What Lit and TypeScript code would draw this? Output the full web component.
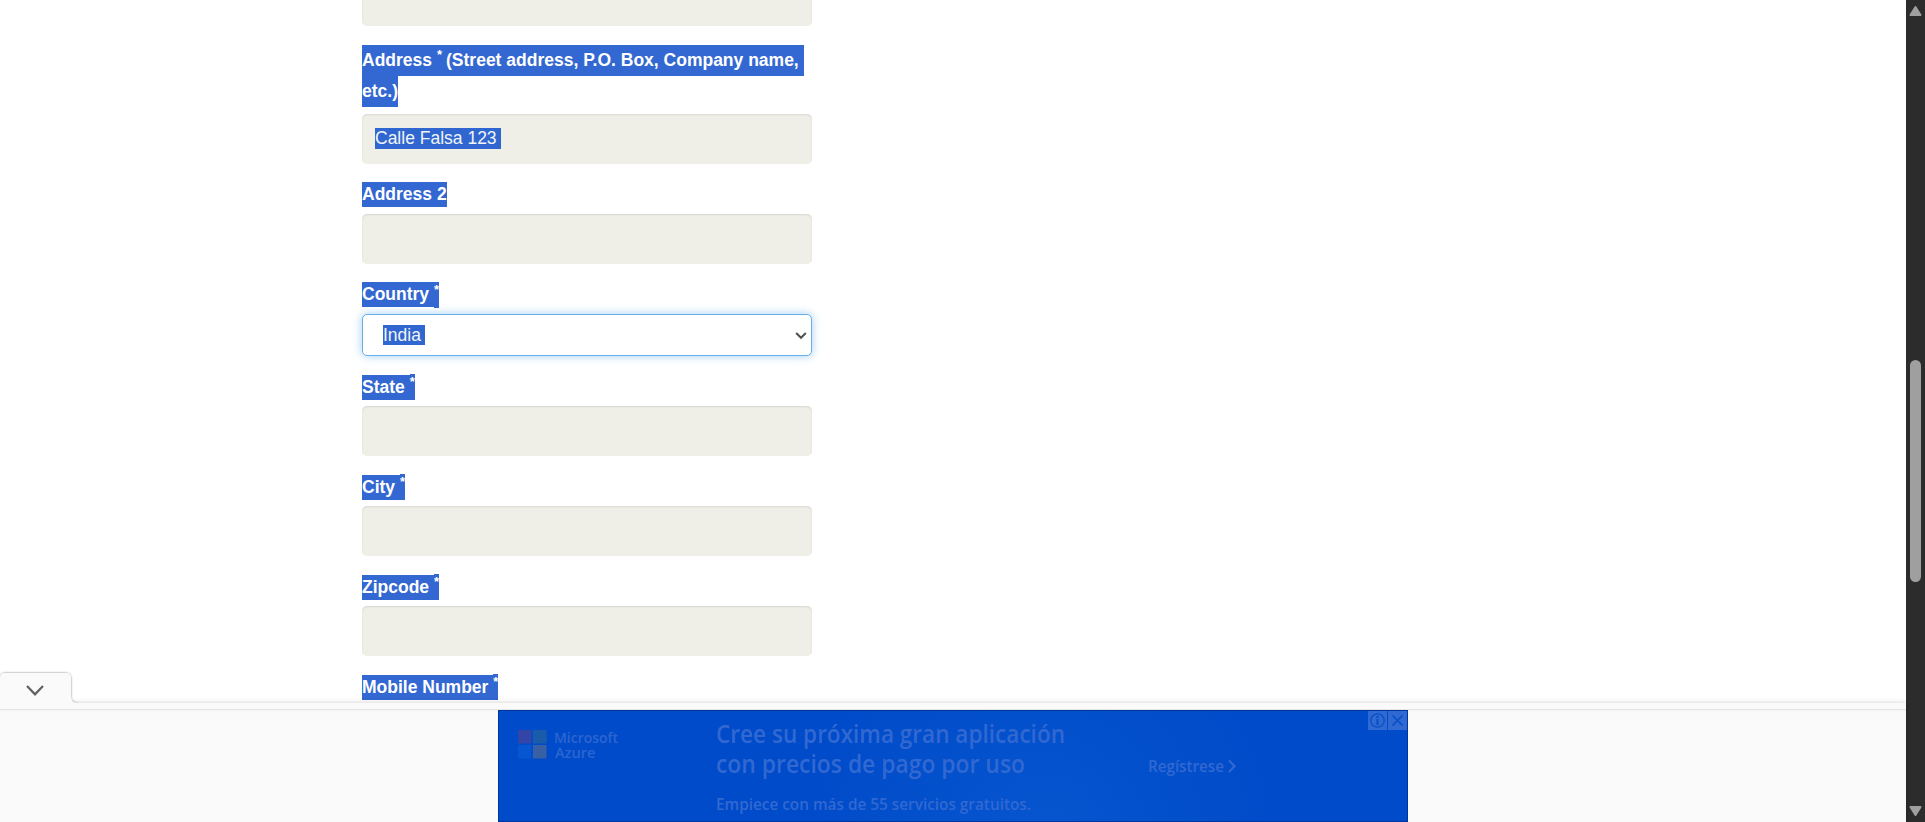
import { LitElement, html, css, svg, nothing } from "lit";
import { customElement, property } from "lit/decorators.js";

@customElement("form-field")
class FormField extends LitElement {
  @property() label = "";
  @property() value = "";
  @property() note = "";
  @property() kind = "text";
  @property({ type: Boolean }) required = false;
  @property({ type: Boolean }) bare = false;

  static styles = css`
    :host { display: block; font: 17.5px/25px "Liberation Sans", Arial, sans-serif; }
    .label { display: flex; height: 25px; font-weight: bold; color: #fff; white-space: pre; margin-bottom: 7px; }
    .label.req { margin-bottom: 6px; }
    .label.country { margin-bottom: 7px; }
    .mark { background: #3367d1; }
    .star { background: #3367d1; width: 5px; height: 26px; margin-top: -1px; font-size: 13px; line-height: 15px; }
    .star.low { margin-top: 0; }
    .long { display: block; height: auto; line-height: 31px; }
    .long .mark { display: block; height: 31px; width: fit-content; }
    .long sup { font-size: 13px; line-height: 0; vertical-align: 7px; margin-right: -.8px; }
    .box { box-sizing: border-box; height: 50px; border-radius: 5px; background: #efefe7; padding: 14px 13px; box-shadow: inset 0 1px 2px rgba(0, 0, 0, .1); }
    .text { display: inline-block; height: 21px; line-height: 20px; background: #3066cf; color: #f1f4f8; padding-right: 4px; vertical-align: top; }
    .select { box-sizing: border-box; display: flex; justify-content: space-between; height: 42px; border: 1px solid #66afe9; border-radius: 5px; background: #fff; padding: 10px 4px 0 20px; box-shadow: 0 0 10px rgba(102, 175, 233, .6); }
    .select .text { height: 20px; }
    .select svg { display: block; margin-top: 6px; }
  `;

  render() {
    const label = this.note
      ? html`<div class="label long"><span class="mark">Address <sup>*</sup>${this.note}</span><span class="mark">etc.)</span></div>`
      : this.label
        ? html`<div class="label ${this.required ? "req" : ""} ${this.kind === "select" ? "country" : ""}"><span class="mark">${this.label}${this.required ? " " : ""}</span>${this.required ? html`<span class="star ${this.kind === "select" ? "low" : ""}">*</span>` : nothing}</div>`
        : nothing;
    const text = this.value ? html`<span class="text">${this.value}</span>` : nothing;
    const control = this.bare
      ? nothing
      : this.kind === "select"
        ? html`<div class="select">${text}<svg width="12" height="10" viewBox="0 0 12 10"><path d="M1.2 2 6 6.8 10.8 2" fill="none" stroke="#505050" stroke-width="2"/></svg></div>`
        : html`<div class="box">${text}</div>`;
    return html`${label}${control}`;
  }
}

@customElement("azure-banner")
class AzureBanner extends LitElement {
  static styles = css`
    :host { display: block; width: 910px; height: 112px; }
    svg { display: block; }
    text { font-family: "Open Sans", "Noto Sans", sans-serif; fill: #3268d2; }
    .head { font-size: 24.5px; font-weight: 600; }
    .sub { font-size: 16px; font-weight: 600; }
    .cta { font-size: 16px; font-weight: 600; }
    .brand { font-size: 15px; font-weight: 600; fill: #2d65d1; }
  `;

  render() {
    return html`<svg width="910" height="112" viewBox="0 0 910 112">
      ${svg`<defs><radialGradient id="glow" gradientUnits="userSpaceOnUse" cx="545" cy="125" r="230">
        <stop offset="0" stop-color="#0655cf"/><stop offset="1" stop-color="#004bc9"/>
      </radialGradient></defs>
      <rect x=".5" y=".5" width="909" height="111" fill="url(#glow)" stroke="#00369c"/>
      <rect x="20" y="20" width="13.5" height="13.5" fill="#3346a8"/>
      <rect x="35" y="20" width="13.5" height="13.5" fill="#1b5caa"/>
      <rect x="20" y="35" width="13.5" height="13.5" fill="#0656d1"/>
      <rect x="35" y="35" width="13.5" height="13.5" fill="#3960a2"/>
      <text class="brand" x="56" y="33" textLength="64" lengthAdjust="spacingAndGlyphs">Microsoft</text>
      <text class="brand" x="57" y="48" textLength="40.5" lengthAdjust="spacingAndGlyphs">Azure</text>
      <text class="head" x="218" y="33" textLength="349" lengthAdjust="spacingAndGlyphs">Cree su próxima gran aplicación</text>
      <text class="head" x="218" y="63" textLength="309" lengthAdjust="spacingAndGlyphs">con precios de pago por uso</text>
      <text class="sub" x="218" y="100" textLength="315" lengthAdjust="spacingAndGlyphs">Empiece con más de 55 servicios gratuitos.</text>
      <text class="cta" x="650" y="62" textLength="76" lengthAdjust="spacingAndGlyphs">Regístrese</text>
      <path d="M731 50.5 736.5 56.2 731 62" fill="none" stroke="#3268d2" stroke-width="2.2"/>
      <path d="M870 1h19v19h-19zM890 1h19v19h-19z" fill="#3169d2"/>
      <circle cx="879.5" cy="10.5" r="6.7" fill="none" stroke="#0650c8" stroke-width="1.3"/>
      <path d="M879.5 6v2M879.5 9v6" stroke="#0650c8" stroke-width="2.2"/>
      <path d="M894.5 5.5l10 10M904.5 5.5l-10 10" stroke="#0650c8" stroke-width="1.7"/>`}
    </svg>`;
  }
}

@customElement("app-root")
class AppRoot extends LitElement {
  static styles = css`
    :host { display: flex; width: 1925px; height: 822px; overflow: hidden; background: #fff; }
    .page { width: 1906px; height: 822px; display: flex; flex-direction: column; }
    .form { box-sizing: border-box; height: 703px; overflow: hidden; padding-left: 362px; display: flex; flex-direction: column; }
    form-field { width: 450px; flex: none; margin-bottom: 18px; }
    .clipped { margin-top: -24px; margin-bottom: 19px; }
    .after { margin-bottom: 19px; }
    .dock { position: relative; height: 119px; display: flex; flex-direction: column; background: #fafafa; box-shadow: 0 0 5px rgba(0, 0, 0, .2); }
    .strip { height: 6px; box-sizing: border-box; flex: none; }
    .ad { height: 113px; display: flex; justify-content: center; padding-top: 1px; box-sizing: border-box; box-shadow: inset 0 2px 2px -1px rgba(0, 0, 0, .11); }
    .tab { position: absolute; left: 0; top: -34px; }
    .scroll { box-sizing: border-box; width: 19px; height: 822px; background: #2c2c2c; display: flex; flex-direction: column; align-items: center; padding: 5px 0; }
    .thumb { width: 11px; height: 222px; border-radius: 6px; background: #9f9f9f; }
    .track { flex: 1; display: flex; flex-direction: column; padding-top: 344px; box-sizing: border-box; }
    .scroll svg { display: block; flex: none; }
  `;

  render() {
    return html`
      <div class="page">
        <div class="form">
          <form-field class="clipped"></form-field>
          <form-field note=" (Street address, P.O. Box, Company name, " value="Calle Falsa 123"></form-field>
          <form-field label="Address 2"></form-field>
          <form-field class="after" label="Country" kind="select" value="India" required></form-field>
          <form-field class="after" label="State" required></form-field>
          <form-field class="after" label="City" required></form-field>
          <form-field class="after" label="Zipcode" required></form-field>
          <form-field label="Mobile Number" required bare></form-field>
        </div>
        <div class="dock">
          <svg class="tab" width="84" height="40" viewBox="0 0 84 40">
            <defs><filter id="soft" x="-10%" y="-20%" width="120%" height="140%"><feDropShadow dx="0" dy="0" stdDeviation="1.3" flood-color="#000" flood-opacity=".5"/></filter>
            <clipPath id="above"><path d="M0 0H84V34H0z"/></clipPath></defs>
            <g clip-path="url(#above)"><path d="M0 9Q1 4 5 4H65Q71 4 71 10V28Q71 34 77 34V42H0z" fill="#fafafa" filter="url(#soft)"/></g>
            <path d="M0 9Q1 4 5 4H65Q71 4 71 10V28Q71 34 77 34V39H0z" fill="#fafafa"/>
            <path d="M27 17 35 25.3 43 17" fill="none" stroke="#616161" stroke-width="2.2"/>
          </svg>
          <div class="strip"></div>
          <div class="ad"><azure-banner></azure-banner></div>
        </div>
      </div>
      <div class="scroll">
        <svg width="13" height="11" viewBox="0 0 13 11"><path d="M6.5 2 11.5 10H1.5z" fill="#a0a0a0" stroke="#a0a0a0" stroke-width="2" stroke-linejoin="round"/></svg>
        <div class="track"><div class="thumb"></div></div>
        <svg width="13" height="11" viewBox="0 0 13 11"><path d="M6.5 9 11.5 1H1.5z" fill="#a0a0a0" stroke="#a0a0a0" stroke-width="2" stroke-linejoin="round"/></svg>
      </div>
    `;
  }
}
